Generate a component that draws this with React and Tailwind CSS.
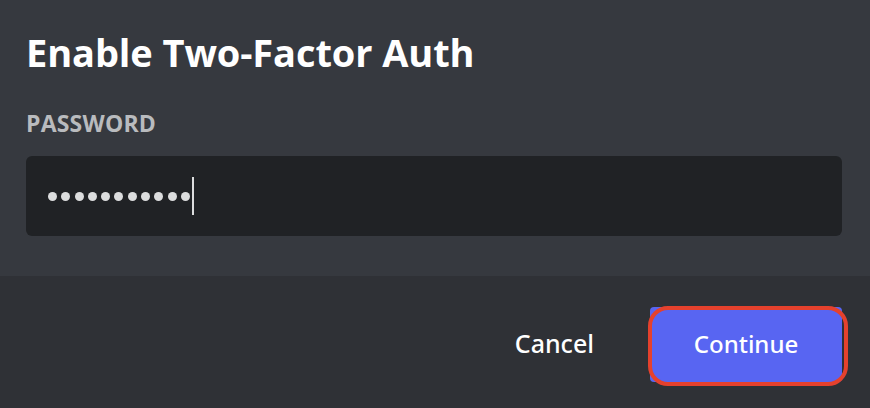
const DOTS = 11

export default function App() {
    return (
        <div className="w-[870px] h-[408px] flex flex-col font-['Noto_Sans',sans-serif]">
            {/* body */}
            <div className="h-[276px] bg-[#36393f] pt-[26px] px-[26px] pr-[28px]">
                <h1 className="text-[38px] leading-[52px] font-bold text-white font-['Open_Sans',sans-serif] tracking-[-0.1px]">
                    Enable Two-Factor Auth
                </h1>
                <div className="mt-[30px] text-[23px] leading-[30px] font-bold text-[#b9bbbe] font-['Open_Sans',sans-serif] tracking-[0.2px]">
                    PASSWORD
                </div>
                <div className="mt-[18px] h-[80px] rounded-[6px] bg-[#202225] flex items-center pl-[22px]">
                    <div className="flex items-center gap-[4.3px]">
                        {Array.from({ length: DOTS }).map((_, i) => (
                            <span key={i} className="w-[9px] h-[9px] rounded-full bg-[#dcddde]" />
                        ))}
                    </div>
                    <span className="ml-[2px] w-[2px] h-[38px] bg-[#dcddde]" />
                </div>
            </div>

            {/* footer */}
            <div className="flex-1 bg-[#2f3136] flex items-center justify-end pr-[28px] pt-[4px]">
                <button className="text-[25px] font-medium text-white mr-[56px]">Cancel</button>
                <div className="relative">
                    <button className="w-[192px] h-[75px] rounded-[4px] bg-[#5865f2] text-[24px] font-medium text-white">
                        Continue
                    </button>
                    <span className="absolute -left-[2px] -top-[1px] -right-[6px] -bottom-[4px] rounded-[20px] border-[4px] border-[#e5412d]" />
                </div>
            </div>
        </div>
    )
}
